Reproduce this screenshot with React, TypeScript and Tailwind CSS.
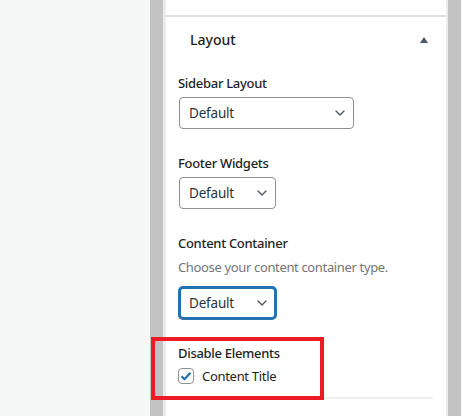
import React from 'react';

const Chevron: React.FC = () => (
    <svg width="10" height="6" viewBox="0 0 10 6" fill="none" className="shrink-0">
        <path d="M1 1l4 4 4-4" stroke="#50575e" strokeWidth="1.4" strokeLinecap="round" strokeLinejoin="round" />
    </svg>
);

type SelectProps = { width: string; focused?: boolean };

const SelectBox: React.FC<SelectProps> = ({ width, focused }) => (
    <div
        className={`${width} h-[32px] flex items-center justify-between rounded-[4px] bg-white text-[13.5px] tracking-[-0.2px] ${
            focused
                ? 'border-2 border-[#2271b1] pl-[8px] pr-[7px] shadow-[0_0_0_1px_#2271b1]'
                : 'border border-[#8c8f94] pl-[9px] pr-[8px]'
        }`}
    >
        <span className="text-[#2c3338]">Default</span>
        <Chevron />
    </div>
);

const App: React.FC = () => {
    return (
        <div
            className="relative w-[462px] h-[416px] overflow-hidden flex bg-[#f6f7f7] text-[#1e1e1e]"
            style={{ fontFamily: '"Noto Sans", "Open Sans", sans-serif' }}
        >
            <div className="w-[150px] shrink-0" />
            <div className="w-[13px] shrink-0 bg-[#c3c3c3]" />

            {/* settings panel */}
            <div className="w-[285px] shrink-0 border-l-[3px] border-r-2 border-[#ececec] bg-white flex flex-col">
                <div className="h-[15px]" />
                <div className="h-[2px] bg-[#e0e0e0]" />

                <div className="h-[46px] flex items-center justify-between pl-[24px] pr-[18px]">
                    <span className="text-[14px] font-medium leading-none">Layout</span>
                    <svg width="8" height="6" viewBox="0 0 8 6">
                        <path d="M4 0L8 6H0z" fill="#50575e" />
                    </svg>
                </div>

                <div className="pl-[12px] flex flex-col">
                    <p className="mt-[11px] text-[13px] font-medium leading-[18px] tracking-[-0.3px]">Sidebar Layout</p>
                    <div className="mt-[5px] ml-[1px]">
                        <SelectBox width="w-[175px]" />
                    </div>

                    <p className="mt-[25px] text-[13px] font-medium leading-[18px] tracking-[-0.3px]">Footer Widgets</p>
                    <div className="mt-[5px] ml-[1px]">
                        <SelectBox width="w-[97px]" />
                    </div>

                    <p className="mt-[25px] text-[13px] font-medium leading-[18px] tracking-[-0.3px]">Content Container</p>
                    <p className="mt-[6px] text-[13px] leading-[18px] tracking-[-0.35px] text-[#757575]">
                        Choose your content container type.
                    </p>
                    <div className="mt-[11px] ml-[1px]">
                        <SelectBox width="w-[97px]" focused />
                    </div>

                    <p className="mt-[25px] text-[13px] font-medium leading-[18px] tracking-[-0.3px]">Disable Elements</p>
                    <label className="mt-[5px] flex items-center gap-[8px]">
                        <span className="w-[16px] h-[16px] rounded-[4px] border border-[#8c8f94] flex items-center justify-center">
                            <svg width="12" height="10" viewBox="0 0 12 10">
                                <path d="M1.5 5.2l3 3L10.5 1.8" stroke="#2271b1" strokeWidth="2.2" fill="none" strokeLinejoin="round" />
                            </svg>
                        </span>
                        <span className="text-[13px] leading-[18px] tracking-[-0.3px]">Content Title</span>
                    </label>
                    <div className="mt-[12px] mr-[13px] h-[2px] bg-[#f0f0f0]" />
                </div>
            </div>

            <div className="w-[13px] shrink-0 bg-[#c3c3c3]" />
            <div className="flex-1" />

            {/* highlight around the checkbox group */}
            <div className="absolute left-[151px] top-[337px] w-[173px] h-[63px] border-[4px] border-[#ed1c24]" />
        </div>
    );
};

export default App;
